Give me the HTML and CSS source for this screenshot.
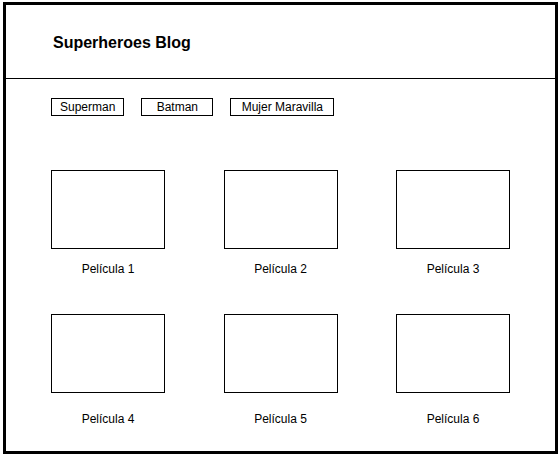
FILE: index.html
```html
<!DOCTYPE html>
<html lang="es">
<head>
<meta charset="utf-8">
<title>Superheroes Blog</title>
<link rel="stylesheet" href="styles.css">
</head>
<body>
<div class="frame">
  <header class="header">
    <h1 class="title">Superheroes Blog</h1>
  </header>
  <nav class="nav">
    <a class="tab">Superman</a>
    <a class="tab">Batman</a>
    <a class="tab tab-wide">Mujer Maravilla</a>
  </nav>
  <main class="grid">
    <div class="card"><div class="thumb"></div><p class="caption">Película 1</p></div>
    <div class="card"><div class="thumb"></div><p class="caption">Película 2</p></div>
    <div class="card"><div class="thumb"></div><p class="caption">Película 3</p></div>
    <div class="card card-low"><div class="thumb"></div><p class="caption">Película 4</p></div>
    <div class="card card-low"><div class="thumb"></div><p class="caption">Película 5</p></div>
    <div class="card card-low"><div class="thumb"></div><p class="caption">Película 6</p></div>
  </main>
</div>
</body>
</html>
```

FILE: styles.css
```css
* { box-sizing: border-box; }
html, body { margin: 0; background: #fff; }
body {
  padding: 2px 0 0 3px;
  font-family: "Liberation Sans", Arial, Helvetica, sans-serif;
  color: #000;
}
.frame {
  width: 555px;
  height: 452px;
  border: 3px solid #000;
  display: flex;
  flex-direction: column;
}
.header {
  height: 74px;
  border-bottom: 1px solid #000;
  padding: 29px 0 0 47px;
}
.title {
  margin: 0;
  font-size: 16px;
  line-height: 18px;
  font-weight: bold;
}
.nav {
  display: flex;
  gap: 17px;
  padding: 19px 0 0 45px;
}
.tab {
  border: 1px solid #000;
  min-width: 72px;
  padding: 0 8px;
  font-size: 12px;
  line-height: 16px;
  text-align: center;
}
.tab-wide { min-width: 104px; }
.grid {
  display: grid;
  grid-template-columns: repeat(3, 114px);
  justify-content: space-between;
  row-gap: 38px;
  margin: 54px 45px 0 45px;
}
.card {
  display: flex;
  flex-direction: column;
  align-items: center;
}
.thumb {
  width: 114px;
  height: 79px;
  border: 1px solid #000;
}
.caption {
  margin: 13px 0 0;
  font-size: 12px;
  line-height: 14px;
}
.card-low .caption { margin-top: 19px; }
```
